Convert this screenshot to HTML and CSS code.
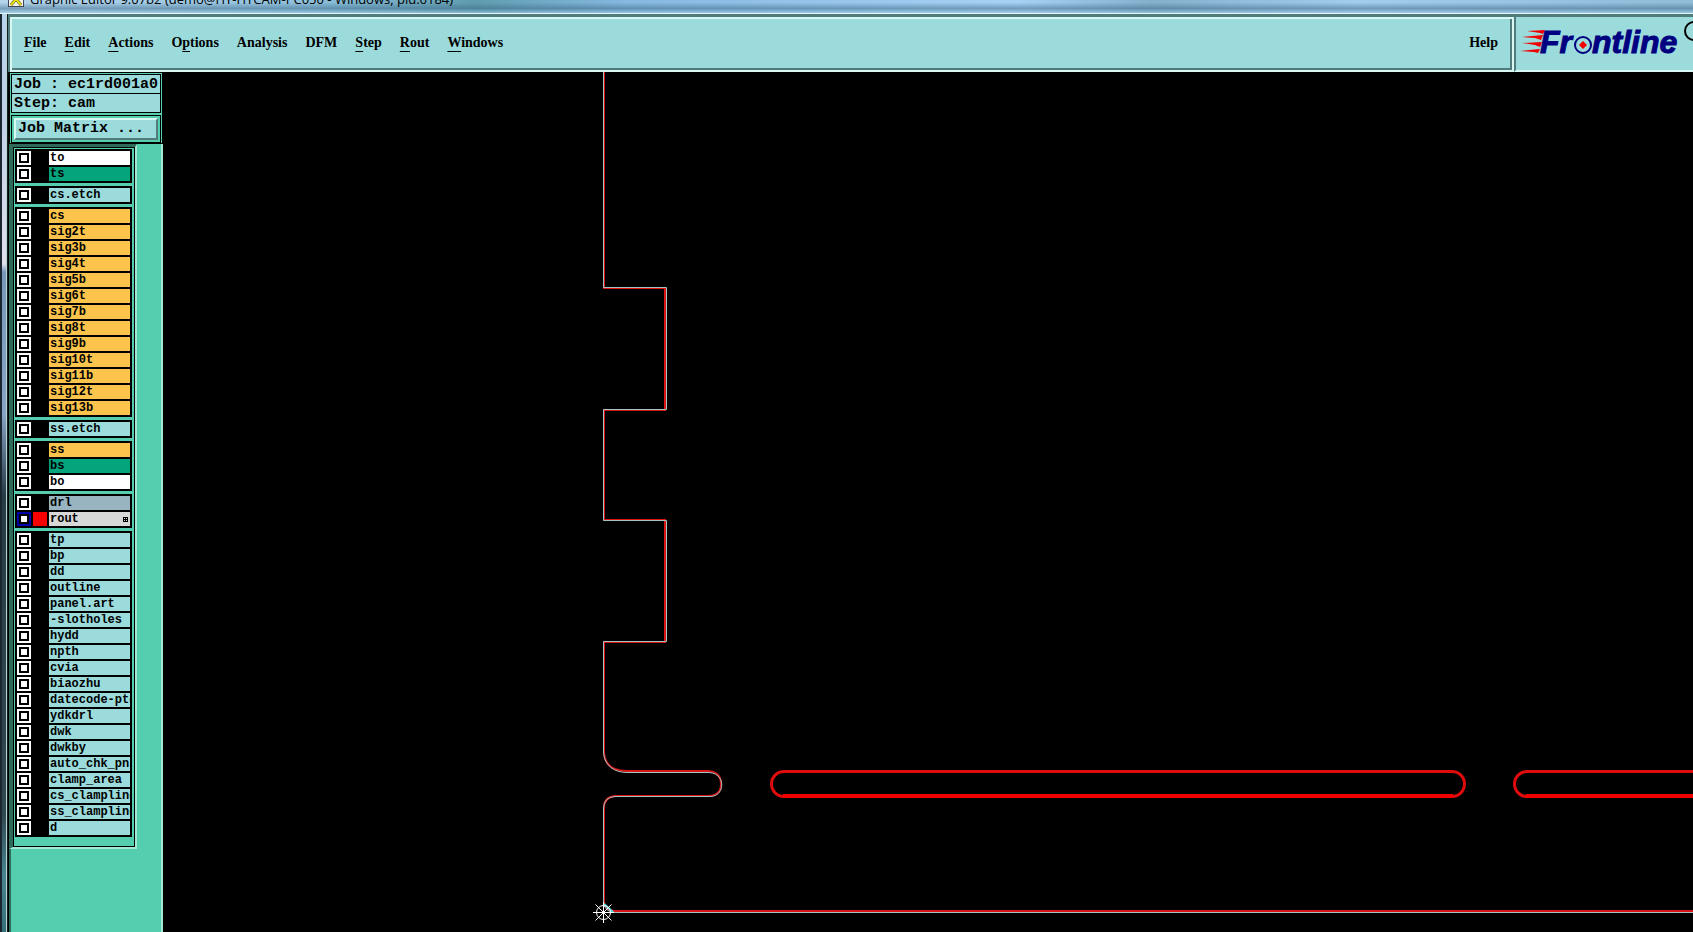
FILE: index.html
```html
<!DOCTYPE html>
<html lang="en">
<head>
  <meta charset="UTF-8" />
  <meta name="viewport" content="width=device-width, initial-scale=1"/>
  <title>Graphic Editor</title>
  <link rel="stylesheet" href="styles.css">
</head>
<body>
  <div class="titlebar">
    <svg class="app-icon" width="16" height="16" viewBox="0 0 16 16">
      <rect x="0.5" y="0.5" width="15" height="15" fill="#f4f4ea" stroke="#445"/>
      <path d="M3 2l10 12M13 2L3 14" stroke="#555" stroke-width="3"/>
      <path d="M3 2l10 12M13 2L3 14" stroke="#e8e000" stroke-width="2"/>
    </svg>
    <span>Graphic Editor 9.07b2 (demo@HY-HYCAM-PC050 - Windows, pid:6184)</span>
  </div>

  <div class="window">
    <div class="frame-edge"></div>
    <div class="app">
      <header class="topbar">
        <nav class="menubar">
          <button><u>F</u>ile</button>
          <button><u>E</u>dit</button>
          <button><u>A</u>ctions</button>
          <button>O<u>p</u>tions</button>
          <button>Analysis</button>
          <button>DFM</button>
          <button><u>S</u>tep</button>
          <button><u>R</u>out</button>
          <button><u>W</u>indows</button>
          <button class="help">Help</button>
        </nav>
        <div class="brand">
          <svg width="176" height="50" role="img" aria-label="Frontline">
            <g fill="#f00000">
              <path d="M10 14L28 13L26 17L23 16Z"/>
              <path d="M5 20L26 18L24 23L18 21Z"/>
              <path d="M5 26L25 25L23 30L18 28Z"/>
              <path d="M3 34L23 32L21 36L17 35Z"/>
            </g>
            <text class="logo-text" x="23" y="36">Fr</text>
            <text class="logo-text" x="75" y="36">ntline</text>
            <circle cx="66" cy="28" r="8" fill="none" stroke="#000080" stroke-width="2"/>
            <path d="M66 24l4 4-4 4-4-4z" fill="#f00000"/>
            <circle cx="177" cy="14" r="9" fill="none" stroke="#000" stroke-width="2"/>
          </svg>
        </div>
      </header>

      <div class="workspace">
        <aside class="sidebar">
          <div class="job-panel">
            <div class="job-info">
              <div>Job : ec1rd001a0</div>
              <div>Step: cam</div>
            </div>
            <div class="matrix">
              <button>Job Matrix ...</button>
            </div>
          </div>

          <div class="layers">
            <div class="layer-list">
              <div class="group">
                <label class="white"><input type="checkbox"><i></i><span>to</span></label>
                <label class="green"><input type="checkbox"><i></i><span>ts</span></label>
              </div>
              <div class="group">
                <label><input type="checkbox"><i></i><span>cs.etch</span></label>
              </div>
              <div class="group">
                <label class="signal"><input type="checkbox"><i></i><span>cs</span></label>
                <label class="signal"><input type="checkbox"><i></i><span>sig2t</span></label>
                <label class="signal"><input type="checkbox"><i></i><span>sig3b</span></label>
                <label class="signal"><input type="checkbox"><i></i><span>sig4t</span></label>
                <label class="signal"><input type="checkbox"><i></i><span>sig5b</span></label>
                <label class="signal"><input type="checkbox"><i></i><span>sig6t</span></label>
                <label class="signal"><input type="checkbox"><i></i><span>sig7b</span></label>
                <label class="signal"><input type="checkbox"><i></i><span>sig8t</span></label>
                <label class="signal"><input type="checkbox"><i></i><span>sig9b</span></label>
                <label class="signal"><input type="checkbox"><i></i><span>sig10t</span></label>
                <label class="signal"><input type="checkbox"><i></i><span>sig11b</span></label>
                <label class="signal"><input type="checkbox"><i></i><span>sig12t</span></label>
                <label class="signal"><input type="checkbox"><i></i><span>sig13b</span></label>
              </div>
              <div class="group">
                <label><input type="checkbox"><i></i><span>ss.etch</span></label>
              </div>
              <div class="group">
                <label class="signal"><input type="checkbox"><i></i><span>ss</span></label>
                <label class="green"><input type="checkbox"><i></i><span>bs</span></label>
                <label class="white"><input type="checkbox"><i></i><span>bo</span></label>
              </div>
              <div class="group">
                <label class="drill"><input type="checkbox"><i></i><span>drl</span></label>
                <label class="rout"><input type="checkbox" checked><i></i><span>rout</span>
                  <svg width="5" height="5" viewBox="0 0 5 5"><path d="M0 0h5v5H0z"/><path d="M1 1h1v1H1zM3 1h1v1H3zM1 3h1v1H1zM3 3h1v1H3z" fill="#d8d8d8"/></svg>
                </label>
              </div>
              <div class="group">
                <label><input type="checkbox"><i></i><span>tp</span></label>
                <label><input type="checkbox"><i></i><span>bp</span></label>
                <label><input type="checkbox"><i></i><span>dd</span></label>
                <label><input type="checkbox"><i></i><span>outline</span></label>
                <label><input type="checkbox"><i></i><span>panel.art</span></label>
                <label><input type="checkbox"><i></i><span>-slotholes</span></label>
                <label><input type="checkbox"><i></i><span>hydd</span></label>
                <label><input type="checkbox"><i></i><span>npth</span></label>
                <label><input type="checkbox"><i></i><span>cvia</span></label>
                <label><input type="checkbox"><i></i><span>biaozhu</span></label>
                <label><input type="checkbox"><i></i><span>datecode-pto</span></label>
                <label><input type="checkbox"><i></i><span>ydkdrl</span></label>
                <label><input type="checkbox"><i></i><span>dwk</span></label>
                <label><input type="checkbox"><i></i><span>dwkby</span></label>
                <label><input type="checkbox"><i></i><span>auto_chk_pnl</span></label>
                <label><input type="checkbox"><i></i><span>clamp_area</span></label>
                <label><input type="checkbox"><i></i><span>cs_clampline</span></label>
                <label><input type="checkbox"><i></i><span>ss_clampline</span></label>
                <label><input type="checkbox"><i></i><span>d</span></label>
              </div>
            </div>
          </div>
        </aside>

        <main class="canvas">
          <svg width="100%" height="100%">
            <!-- board outline: rout path, then profile on top -->
            <path d="M441 0V216H502V338H441V448H502V570H441V680Q442 699 464 699H545Q558 700 558 712Q558 724 545 724H452Q441 725 441 736V830Q442 839 452 839H4000" fill="none" stroke="#d81414" stroke-width="2"/>
            <path d="M440.5 0V215.5H503.5V337.5H440.5V448.5H503.5V569.5H440.5V680C441 694 452 700.5 464 700.5H546C563 701 563 725 546 724.5H452Q441 725 440.5 736V831Q442 840 452 840.5H4000" fill="none" stroke="#a4c4c4"/>

            <!-- slots -->
            <g fill="none" stroke="#e00c0c" stroke-width="3">
              <rect x="608.5" y="699.5" width="693" height="25" rx="12.5"/>
              <rect x="1351.5" y="699.5" width="2600" height="25" rx="12.5"/>
              <path d="M620 724H1290M1363 724H3900" stroke="#f00000" stroke-width="4"/>
            </g>

            <!-- datum -->
            <g fill="none" stroke="#fff">
              <path d="M441 832L450 840" stroke="#4be0e8" stroke-width="2"/>
              <circle cx="440.5" cy="840.5" r="7"/>
              <path d="M430 840.5H451M440.5 830V851M432.5 832.5L448.5 848.5M448.5 832.5L432.5 848.5"/>
            </g>
          </svg>
        </main>
      </div>
    </div>
  </div>
</body>
</html>
```
FILE: styles.css
```css
*, *::before, *::after { box-sizing: border-box; margin: 0; padding: 0; }
body {
  height: 100vh;
  display: flex;
  flex-direction: column;
  overflow: hidden;
  background: #000;
  color: #000;
}
button { border: none; background: none; color: #000; cursor: pointer; }

/* window frame */
.titlebar {
  height: 14px;
  flex: none;
  display: flex;
  align-items: flex-end;
  gap: 6px;
  padding: 0 8px 6px;
  overflow: hidden;
  border-bottom: 1px solid #e4f4fc;
  background:
    linear-gradient(transparent 20%, rgba(60,105,135,0.5) 65%, rgba(160,210,235,0.6)),
    linear-gradient(90deg, #b4d4ec, #8fc0dc 18%, #5f9cae 28%, #86b8e0 37%, #a8d0f4 60%, #84b0cc 68%, #a4ccec 80%, #90bcd8);
  font: 13px/16px "Open Sans", "Noto Sans", sans-serif;
  white-space: nowrap;
}
.titlebar span, .app-icon { flex: none; }
.window { flex: 1; display: flex; min-height: 0; }
.frame-edge {
  width: 8px;
  flex: none;
  border-left: 2px solid #1c2630;
  border-right: 1px solid #10201c;
  box-shadow: inset -1px 0 #b8d4d8;
  background: linear-gradient(#b8d4ec, #c0d0e8 100px, #e0e0ec 250px, #7898b8 258px, #88a4c4 400px, #283c48 480px, #304850 800px, #488490 860px, #387078);
}
.app { flex: 1; min-width: 0; display: flex; flex-direction: column; }

/* menu bar */
.topbar { display: flex; flex: none; background: #9bdbdb; border-top: 3px solid #527c7c; border-left: 2px solid #527c7c; }
.menubar {
  flex: 1;
  height: 55px;
  display: flex;
  align-items: center;
  gap: 18px;
  padding: 0 14px 4px 12px;
  border: 2px solid #d8f8f4;
  box-shadow: inset -2px -2px #527c7c;
}
.menubar button { font: bold 14px/20px "Liberation Serif", serif; }
.menubar u { text-underline-offset: 4px; }
.menubar .help { margin-left: auto; }
.brand {
  width: 179px;
  padding-left: 1px;
  overflow: hidden;
  border-left: 2px solid #527c7c;
  border-bottom: 2px solid #d8f8f4;
}
.brand svg { display: block; }
.logo-text { font: italic bold 32px "Liberation Sans", sans-serif; fill: #000080; stroke: #000080; }

/* sidebar */
.workspace { flex: 1; display: flex; min-height: 0; }
.sidebar {
  width: 155px;
  flex: none;
  background: #54ceae;
  border-left: 1px solid #000;
  border-right: 2px solid #a4e8d4;
  box-shadow: inset 2px 0 #2f6b5b;
}
.job-panel {
  margin-right: -2px;
  padding: 1px 1px 0;
  border: 1px solid #000;
  background: #54ceae;
}
.job-info, .job-info div, .matrix { border: 1px solid #000; }
.job-info div {
  height: 19px;
  padding-left: 2px;
  border-width: 0 0 1px;
  background: #9bdbdb;
  font: bold 15px/19px "Liberation Mono", monospace;
}
.job-info div:last-child { border-bottom: none; height: 18px; }
.matrix { margin-top: 2px; padding: 2px; }
.matrix button {
  display: block;
  width: 100%;
  padding: 0 2px;
  background: #9bdbdb;
  border: 2px solid;
  border-color: #d8f8f4 #527c7c #527c7c #d8f8f4;
  text-align: left;
  font: bold 15px/18px "Liberation Mono", monospace;
}

/* layer list */
.layers {
  width: 128px;
  border: 4px solid #2f6b5b;
  border-top-width: 3px;
  border-right: 2px solid #a4e8d4;
  border-bottom: 2px solid #a4e8d4;
}
.layer-list {
  display: flex;
  flex-direction: column;
  gap: 3px;
  padding: 1px 2px 9px 1px;
  border: 1px solid #000;
  background: #54ceae;
}
.group { display: grid; grid-template-columns: minmax(0, 1fr); gap: 2px; padding: 2px; background: #000; }
.group label { position: relative; display: flex; gap: 2px; height: 14px; background: #000; cursor: pointer; }
.group input {
  appearance: none;
  width: 14px;
  height: 14px;
  flex: none;
  border: 2px solid #fff;
  background: #fff;
  box-shadow: inset 0 0 0 2px #000;
}
.group input:checked { border-color: #0000a8; }
.group i { width: 14px; flex: none; }
.group span {
  flex: 1;
  min-width: 0;
  padding-left: 1px;
  overflow: hidden;
  background: #9bdbdb;
  font: bold 12px/14px "Liberation Mono", monospace;
  white-space: nowrap;
}
.group .white span { background: #fff; }
.group .green span { background: #04a47c; }
.group .signal span { background: #fcc44c; }
.group .drill span { background: #98b4c0; }
.group .rout span { background: #d8d8d8; }
.group .rout i { background: #f80000; }
.group svg { position: absolute; right: 2px; top: 5px; }

/* drawing area */
.canvas { flex: 1; min-width: 0; background: #000; }
.canvas svg { display: block; }
```
